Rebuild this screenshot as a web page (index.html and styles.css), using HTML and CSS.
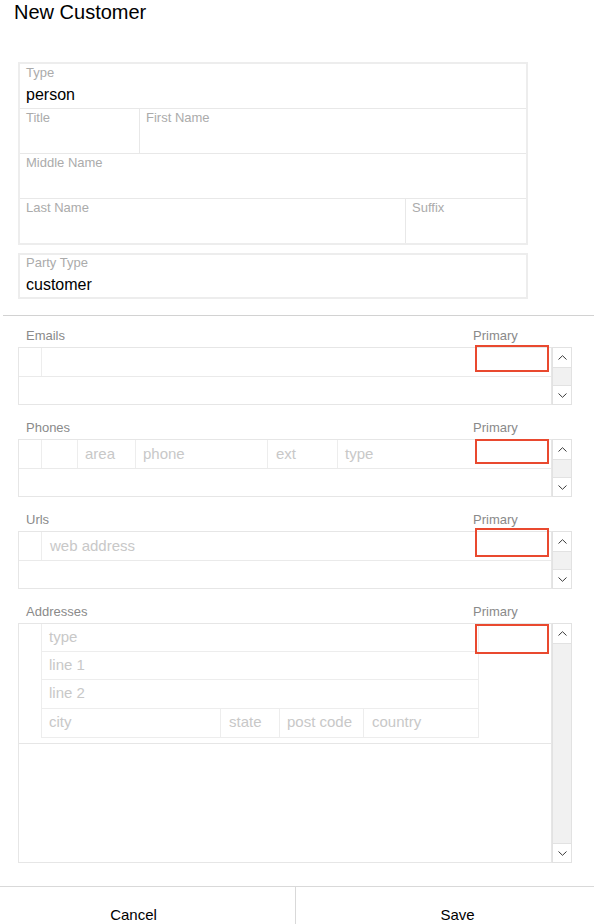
FILE: index.html
```html
<!DOCTYPE html>
<html lang="en">
<head>
<meta charset="utf-8">
<title>New Customer</title>
<link rel="stylesheet" href="styles.css">
</head>
<body>
<h1 class="title">New Customer</h1>

<div class="fieldbox">
  <div class="frow">
    <div class="fcell"><div class="flabel">Type</div><div class="fvalue">person</div></div>
  </div>
  <div class="frow">
    <div class="fcell fcell--title"><div class="flabel">Title</div></div>
    <div class="fcell"><div class="flabel">First Name</div></div>
  </div>
  <div class="frow">
    <div class="fcell"><div class="flabel">Middle Name</div></div>
  </div>
  <div class="frow">
    <div class="fcell"><div class="flabel">Last Name</div></div>
    <div class="fcell fcell--suffix"><div class="flabel">Suffix</div></div>
  </div>
</div>

<div class="fieldbox fieldbox--party">
  <div class="frow frow--party">
    <div class="fcell"><div class="flabel">Party Type</div><div class="fvalue">customer</div></div>
  </div>
</div>

<div class="sep"></div>

<div class="lists">
  <section class="list">
    <div class="list-head"><span class="list-name">Emails</span><span>Primary</span></div>
    <div class="list-body">
      <div class="grid">
        <div class="grow">
          <div class="gcell gcell--handle"></div>
          <div class="gcell gcell--input"></div>
          <div class="gcell gcell--primary"></div>
        </div>
      </div>
      <div class="scroll">
        <div class="sbtn"><svg width="9" height="5" viewBox="0 0 9 5"><polyline points="0.5,4.5 4.5,0.7 8.5,4.5" fill="none" stroke="#3a3a3a" stroke-width="1"/></svg></div>
        <div class="strack"></div>
        <div class="sbtn sbtn--down"><svg width="9" height="5" viewBox="0 0 9 5"><polyline points="0.5,0.5 4.5,4.3 8.5,0.5" fill="none" stroke="#3a3a3a" stroke-width="1"/></svg></div>
      </div>
      <div class="focus focus--emails"></div>
    </div>
  </section>

  <section class="list">
    <div class="list-head"><span class="list-name">Phones</span><span>Primary</span></div>
    <div class="list-body">
      <div class="grid">
        <div class="grow">
          <div class="gcell gcell--handle"></div>
          <div class="gcell gcell--blank"></div>
          <div class="gcell gcell--area">area</div>
          <div class="gcell gcell--phone">phone</div>
          <div class="gcell gcell--ext">ext</div>
          <div class="gcell gcell--type">type</div>
          <div class="gcell gcell--primary"></div>
        </div>
      </div>
      <div class="scroll">
        <div class="sbtn"><svg width="9" height="5" viewBox="0 0 9 5"><polyline points="0.5,4.5 4.5,0.7 8.5,4.5" fill="none" stroke="#3a3a3a" stroke-width="1"/></svg></div>
        <div class="strack"></div>
        <div class="sbtn sbtn--down"><svg width="9" height="5" viewBox="0 0 9 5"><polyline points="0.5,0.5 4.5,4.3 8.5,0.5" fill="none" stroke="#3a3a3a" stroke-width="1"/></svg></div>
      </div>
      <div class="focus focus--phones"></div>
    </div>
  </section>

  <section class="list">
    <div class="list-head"><span class="list-name">Urls</span><span>Primary</span></div>
    <div class="list-body">
      <div class="grid">
        <div class="grow">
          <div class="gcell gcell--handle"></div>
          <div class="gcell gcell--input">web address</div>
          <div class="gcell gcell--primary"></div>
        </div>
      </div>
      <div class="scroll">
        <div class="sbtn"><svg width="9" height="5" viewBox="0 0 9 5"><polyline points="0.5,4.5 4.5,0.7 8.5,4.5" fill="none" stroke="#3a3a3a" stroke-width="1"/></svg></div>
        <div class="strack"></div>
        <div class="sbtn sbtn--down"><svg width="9" height="5" viewBox="0 0 9 5"><polyline points="0.5,0.5 4.5,4.3 8.5,0.5" fill="none" stroke="#3a3a3a" stroke-width="1"/></svg></div>
      </div>
      <div class="focus focus--urls"></div>
    </div>
  </section>

  <section class="list">
    <div class="list-head"><span class="list-name">Addresses</span><span>Primary</span></div>
    <div class="list-body list-body--tall">
      <div class="grid">
        <div class="addr-block">
          <div class="addr-handle"></div>
          <div class="addr-fields">
            <div class="arow"><div class="acell">type</div></div>
            <div class="arow"><div class="acell">line 1</div></div>
            <div class="arow"><div class="acell">line 2</div></div>
            <div class="arow">
              <div class="acell acell--city">city</div>
              <div class="acell acell--state">state</div>
              <div class="acell acell--post">post code</div>
              <div class="acell acell--country">country</div>
            </div>
          </div>
          <div class="addr-primary"></div>
        </div>
      </div>
      <div class="scroll">
        <div class="sbtn"><svg width="9" height="5" viewBox="0 0 9 5"><polyline points="0.5,4.5 4.5,0.7 8.5,4.5" fill="none" stroke="#3a3a3a" stroke-width="1"/></svg></div>
        <div class="strack"></div>
        <div class="sbtn sbtn--down"><svg width="9" height="5" viewBox="0 0 9 5"><polyline points="0.5,0.5 4.5,4.3 8.5,0.5" fill="none" stroke="#3a3a3a" stroke-width="1"/></svg></div>
      </div>
      <div class="focus focus--addresses"></div>
    </div>
  </section>
</div>

<div class="actions">
  <button class="btn btn--cancel" type="button">Cancel</button>
  <button class="btn btn--save" type="button">Save</button>
</div>
</body>
</html>
```

FILE: styles.css
```css
* { box-sizing: border-box; }

html, body {
  margin: 0;
  padding: 0;
  overflow: hidden;
}

body {
  width: 594px;
  height: 924px;
  font-family: "Liberation Sans", Arial, sans-serif;
  color: #000;
  background: #fff;
}

.title {
  margin: 0;
  padding-left: 14px;
  height: 24px;
  font-size: 20px;
  font-weight: normal;
  line-height: 24px;
}

/* top field boxes */
.fieldbox {
  margin: 38px 0 0 18px;
  width: 510px;
  border: 2px solid #ededed;
  background: #e8e8e8;
  display: flex;
  flex-direction: column;
  gap: 1px;
}

.fieldbox--party { margin-top: 8px; }

.frow {
  display: flex;
  gap: 1px;
  height: 44px;
}

.frow--party { height: 42px; }

.fcell {
  flex: 1;
  background: #fff;
  padding: 1px 6px 0;
}

.frow--party .fcell { padding-top: 0; }

.fcell--title { flex: 0 0 119px; }
.fcell--suffix { flex: 0 0 120px; }

.flabel {
  font-size: 13px;
  line-height: 16px;
  color: #ababab;
}

.fvalue {
  margin-top: 4px;
  font-size: 16px;
  line-height: 20px;
}

.frow--party .fvalue { margin-top: 4px; }

.sep {
  margin: 16px 0 0 3px;
  border-top: 1px solid #d2d2d2;
}

/* list sections */
.lists {
  margin-left: 18px;
  width: 554px;
  padding-top: 12px;
  display: flex;
  flex-direction: column;
  gap: 15px;
}

.list-head {
  display: grid;
  grid-template-columns: 455px 1fr;
  height: 16px;
  margin-bottom: 3px;
  font-size: 13px;
  line-height: 16px;
  color: #8a8a8a;
}

.list-name { padding-left: 8px; }

.list-body {
  position: relative;
  display: flex;
  height: 58px;
}

.list-body--tall { height: 240px; }

.grid {
  flex: 0 0 534px;
  border: 1px solid #e6e6e6;
  display: flex;
  flex-direction: column;
  background: #fff;
}

.grow {
  display: flex;
  height: 29px;
  border-bottom: 1px solid #eaeaea;
}

.gcell {
  height: 28px;
  padding-left: 7px;
  font-size: 15px;
  line-height: 28px;
  color: #c8c8c8;
  border-right: 1px solid #ededed;
  white-space: nowrap;
}

.gcell--handle { width: 23px; padding: 0; }
.gcell--input { width: 433px; border-right: 0; padding-left: 8px; }
.gcell--blank { width: 36px; }
.gcell--area { width: 58px; }
.gcell--phone { width: 132px; }
.gcell--ext { width: 70px; padding-left: 8px; }
.gcell--type { width: 137px; border-right: 0; }
.gcell--primary { width: 76px; border-right: 0; }

/* addresses */
.addr-block {
  display: flex;
  padding-bottom: 5px;
  border-bottom: 1px solid #e6e6e6;
}

.addr-handle {
  width: 23px;
  border-right: 1px solid #ededed;
}

.addr-fields {
  width: 437px;
  border-right: 1px solid #ededed;
}

.addr-primary { width: 72px; }

.arow {
  display: flex;
  height: 28px;
  border-bottom: 1px solid #ededed;
}

.arow:nth-child(n+3) { height: 29px; }

.acell {
  flex: 1;
  padding-left: 7px;
  font-size: 15px;
  line-height: 26px;
  color: #c8c8c8;
  white-space: nowrap;
}

.acell--city { flex: 0 0 179px; border-right: 1px solid #ededed; }
.acell--state { flex: 0 0 59px; border-right: 1px solid #ededed; padding-left: 8px; }
.acell--post { flex: 0 0 84px; border-right: 1px solid #ededed; }
.acell--country { flex: 0 0 114px; padding-left: 8px; }

/* scrollbar */
.scroll {
  flex: 0 0 20px;
  border: 1px solid #e2e2e2;
  display: flex;
  flex-direction: column;
}

.sbtn {
  height: 20px;
  flex: 0 0 auto;
  background: #fff;
  border-bottom: 1px solid #e2e2e2;
  display: flex;
  align-items: center;
  justify-content: center;
}

.sbtn--down {
  height: 19px;
  border-bottom: 0;
  border-top: 1px solid #e2e2e2;
}

.strack {
  flex: 1;
  background: #f1f1f1;
}

/* focused primary cell */
.focus {
  position: absolute;
  left: 457px;
  top: -1px;
  width: 74px;
  height: 27px;
  border: 2px solid #e9492f;
}

.focus--emails { top: -2px; height: 27px; }
.focus--phones { top: 0; height: 25px; }
.focus--urls { top: -3px; height: 29px; }
.focus--addresses { top: 1px; height: 30px; }

/* footer buttons */
.actions {
  margin-top: 23px;
  height: 38px;
  border-top: 1px solid #d9d9d9;
  display: flex;
}

.btn {
  margin: 0;
  border: 0;
  background: #fff;
  font-family: "Liberation Sans", Arial, sans-serif;
  font-size: 15px;
  line-height: 18px;
  color: #000;
  padding: 19px 0 0;
  text-align: center;
  height: 37px;
  display: block;
}

.btn--cancel {
  width: 296px;
  border-right: 1px solid #d9d9d9;
  padding-right: 28px;
}

.btn--save {
  flex: 1;
  padding-left: 25px;
}
```
